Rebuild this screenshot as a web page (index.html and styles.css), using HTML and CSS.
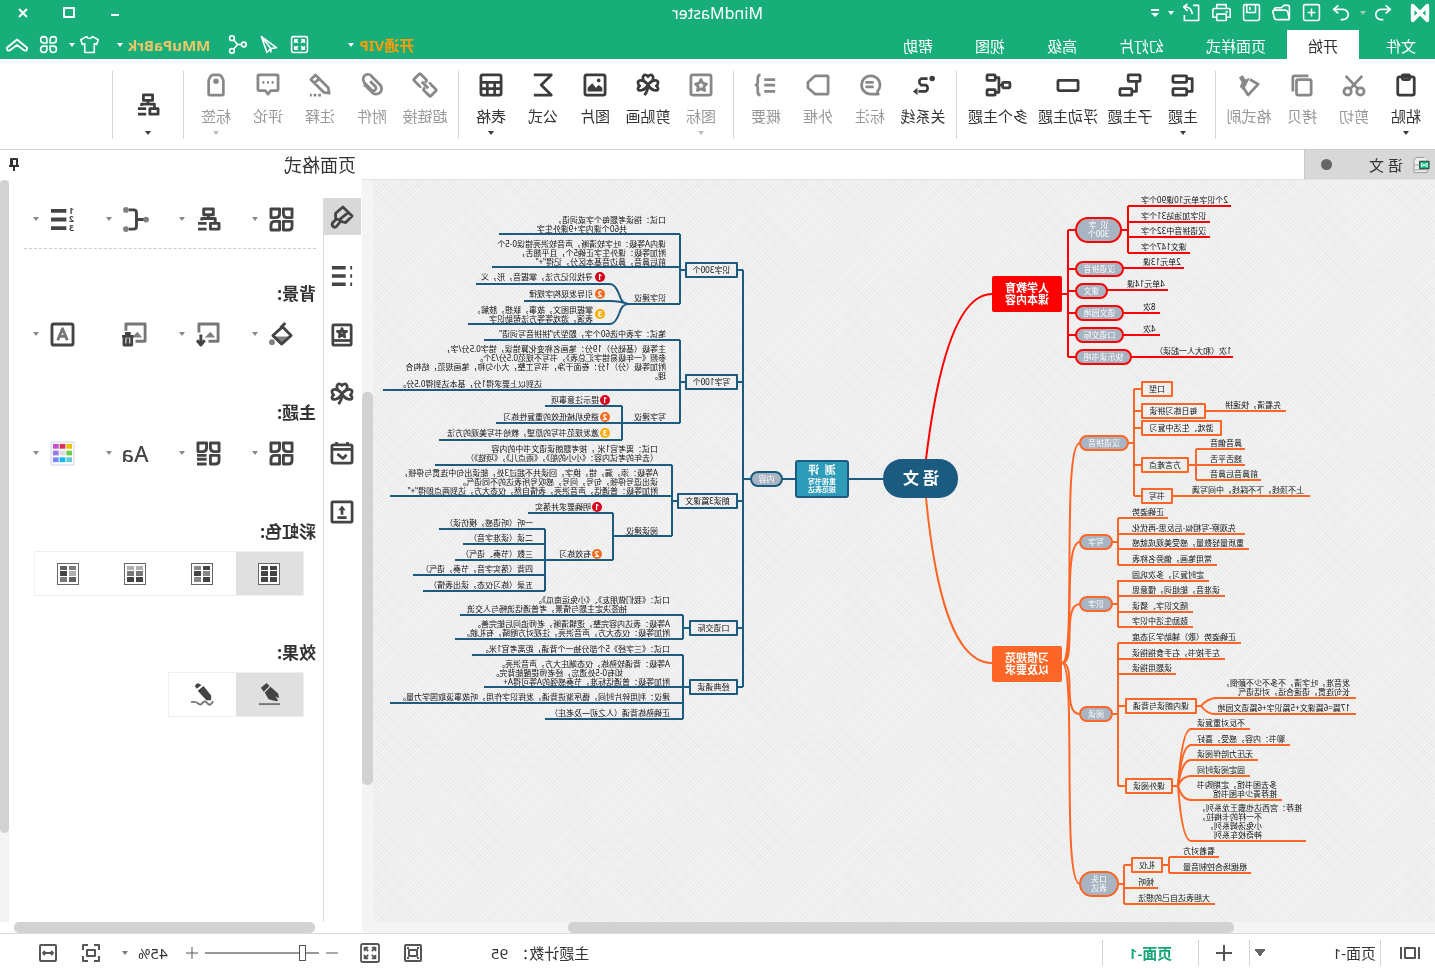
FILE: index.html
```html
<!DOCTYPE html>
<html lang="zh-CN">
<head>
<meta charset="utf-8">
<title>MindMaster</title>
<link rel="stylesheet" href="styles.css">
</head>
<body>
<svg class="sprite" aria-hidden="true">
  <symbol id="caret" viewBox="0 0 8 8"><path class="solid" d="M1 2h6L4 6z"/></symbol>
  <symbol id="logo" viewBox="0 0 24 24"><path class="ribbon-mark" d="M4 4v16L20 4v16z"/></symbol>
  <symbol id="undo" viewBox="0 0 24 24"><path d="M8 3L2 8l6 5M2 8h12a6 6 0 0 1 0 13h-3"/></symbol>
  <symbol id="redo" viewBox="0 0 24 24"><path d="M16 3l6 5-6 5M22 8H10a6 6 0 0 0 0 13h3"/></symbol>
  <symbol id="new" viewBox="0 0 24 24"><rect x="2" y="2" width="20" height="20" rx="2"/><path d="M12 7v10M7 12h10"/></symbol>
  <symbol id="open" viewBox="0 0 24 24"><path d="M2 19V5q0-2 2-2h5l3 3h7q2 0 2 3M2 21l2-9q1-3 3-3h14q2 0 2 2l-2 8q0 2-3 2H2"/></symbol>
  <symbol id="save" viewBox="0 0 24 24"><rect x="2" y="2" width="20" height="20" rx="2"/><path d="M7 2v10h11V2M14 5v4"/></symbol>
  <symbol id="print" viewBox="0 0 24 24"><path d="M6 7V2h12v5M6 18H1V9q0-2 2-2h18q2 0 2 2v9h-5M4 11h3"/><rect x="6" y="14" width="12" height="8"/></symbol>
  <symbol id="export" viewBox="0 0 24 24"><path d="M10 3H3v19h18v-7M22 5h-4q-6 1-7 9M17 1l5 4-5 5"/></symbol>
  <symbol id="full" viewBox="0 0 24 24"><rect x="2" y="2" width="20" height="20" rx="2"/><path d="M6 10V6h4M14 6h4v4M18 14v4h-4M10 18H6v-4M6 6l4 4M18 6l-4 4M18 18l-4-4M6 18l4-4"/></symbol>
  <symbol id="send" viewBox="0 0 24 24"><path d="M21 2L2 16l7 1 5 5zM21 2L9 17v5"/></symbol>
  <symbol id="share" viewBox="0 0 24 24"><circle cx="4" cy="12" r="3"/><circle cx="19" cy="4" r="3"/><circle cx="19" cy="20" r="3"/><path d="M7 12h5l5-6M12 12l5 6"/></symbol>
  <symbol id="shirt" viewBox="0 0 24 24"><path d="M8 2L1 6l2 6 3-1v11h12V11l3 1 2-6-7-4q-4 5-8 0z"/></symbol>
  <symbol id="cmd" viewBox="0 0 24 24"><path d="M10 10V6a4 4 0 1 0-4 4zM14 10h4a4 4 0 1 0-4-4zM10 14H6a4 4 0 1 0 4 4zM14 14v4a4 4 0 1 0 4-4z"/></symbol>
  <symbol id="up" viewBox="0 0 24 24"><path d="M1 15l11-9 11 9q0 4-3 3l-8-6-8 6q-3 1-3-3z"/></symbol>
  <symbol id="paste" viewBox="0 0 24 24"><rect x="3" y="3" width="18" height="20" rx="2"/><rect x="8" y="1" width="8" height="5" rx="1"/></symbol>
  <symbol id="cut" viewBox="0 0 24 24"><circle cx="5" cy="19" r="4"/><circle cx="19" cy="19" r="4"/><path d="M8 16L21 2M16 16L3 2"/></symbol>
  <symbol id="copy" viewBox="0 0 24 24"><rect x="2" y="6" width="16" height="17" rx="2"/><path d="M5 2h15q2 0 2 2v15"/></symbol>
  <symbol id="brushfmt" viewBox="0 0 24 24"><path d="M11 6L2 11l11 12 5-8"/><path class="solid" d="M11 4l5 2 3-5 4 3-3 5 2 5-4 4z"/></symbol>
  <symbol id="topic" viewBox="0 0 24 24"><rect x="8" y="2" width="15" height="7" rx="1"/><rect x="8" y="16" width="15" height="7" rx="1"/><path d="M8 5H2v14h6"/></symbol>
  <symbol id="subtopic" viewBox="0 0 24 24"><rect x="1" y="1" width="13" height="7" rx="1"/><rect x="10" y="16" width="13" height="7" rx="1"/><path d="M5 8v11h5"/></symbol>
  <symbol id="floating" viewBox="0 0 24 24"><rect x="1" y="7" width="22" height="11" rx="1"/></symbol>
  <symbol id="multi" viewBox="0 0 24 24"><rect x="-1" y="9" width="8" height="6" rx="1"/><rect x="15" y="1" width="9" height="6" rx="1"/><rect x="15" y="17" width="9" height="6" rx="1"/><path d="M7 12h4M15 4h-4v16h4"/></symbol>
  <symbol id="relation" viewBox="0 0 24 24"><circle class="solid" cx="2" cy="5" r="3"/><path d="M7 5h7a4 4 0 0 1 0 7H9a4 4 0 0 0 0 7h8"/><path class="solid" d="M18 15l5 4-5 4z"/></symbol>
  <symbol id="callout" viewBox="0 0 24 24"><path d="M4 19a10 10 0 1 1 7 3H3zM8 9h9M8 14h9"/></symbol>
  <symbol id="frame" viewBox="0 0 24 24"><path d="M2 2h13l8 7v6l-8 7H2q-1 0-1-1V3q0-1 1-1z"/></symbol>
  <symbol id="summary" viewBox="0 0 24 24"><path d="M2 6h12M2 12h12M2 19h12M18 1q3 0 3 4v4q0 3 2 3-2 0-2 3v4q0 4-3 4"/></symbol>
  <symbol id="star" viewBox="0 0 24 24"><rect x="1" y="1" width="22" height="22" rx="2"/><path d="M12 6l2 4 4 1-3 3 1 4-4-2-4 2 1-4-3-3 4-1z"/></symbol>
  <symbol id="clover" viewBox="0 0 24 24"><path d="M12 11C4 7 6 1 9 1q2 0 3 2 1-2 3-2c3 0 5 6-3 10zM12 12C8 19 1 19 1 16q0-2 2-3-2-1-2-4c1-3 8-3 11 3zM12 12c4 7 11 7 11 4q0-2-2-3 2-1 2-4c-1-3-8-3-11 3zM12 12q0 7 4 11"/></symbol>
  <symbol id="picture" viewBox="0 0 24 24"><rect x="1" y="1" width="22" height="22" rx="2"/><circle class="solid" cx="8" cy="7" r="2"/><path class="solid" d="M4 19v-4l4-3 3 3 4-5 5 5v4z"/></symbol>
  <symbol id="sigma" viewBox="0 0 24 24"><path d="M22 1H3l11 11L3 23h19"/></symbol>
  <symbol id="table" viewBox="0 0 24 24"><rect x="1" y="1" width="22" height="22" rx="2"/><path d="M1 9h22M1 16h22M8 9v14M16 9v14"/></symbol>
  <symbol id="link" viewBox="0 0 24 24"><g transform="rotate(-45 12 12)"><path d="M10 14v2q0 1-1 1H0q-1 0-1-1V8q0-1 1-1h9q1 0 1 1M14 10V8q0-1 1-1h9q1 0 1 1v8q0 1-1 1h-9q-1 0-1-1M7 12h10"/></g></symbol>
  <symbol id="clip" viewBox="0 0 24 24"><path d="M21 11l-9 9a6 6 0 0 1-9-8l9-9a5 5 0 0 1 9 5q0 2-2 3l-7 7a3 3 0 0 1-4-4l6-6"/></symbol>
  <symbol id="note" viewBox="0 0 24 24"><path d="M17 1l5 5L8 20l-6 1 1-6zM13 5l5 5M11 23h3M16 23h3M21 23h2"/></symbol>
  <symbol id="comment" viewBox="0 0 24 24"><path d="M2 1h20q1 0 1 1v15q0 1-1 1h-7l-3 4-3-4H2q-1 0-1-1V2q0-1 1-1z"/><path d="M6 9h2M11 9h2M16 9h2"/></symbol>
  <symbol id="tag" viewBox="0 0 24 24"><path d="M4 7q2-6 5-6h6q3 0 5 6v15q0 1-1 1H5q-1 0-1-1z"/><circle class="solid" cx="12" cy="8" r="3"/></symbol>
  <symbol id="layout" viewBox="0 0 24 24"><rect x="7" y="1" width="10" height="6"/><path d="M12 7v4M5 15v-4h14v2M14 16h9M14 22h9"/><rect x="1" y="16" width="9" height="6"/></symbol>
  <symbol id="paint" viewBox="0 0 24 24"><path d="M1 11L11 1l8 7v6l-4 1q-3 3-7 3zM5 7l10 8M17 13l5 5q2 3-1 5-2 1-4-2l-4-5"/></symbol>
  <symbol id="list" viewBox="0 0 24 24"><path class="bold" d="M8 3h15M8 12h15M8 21h15M1 3h2M1 12h2M1 21h2"/></symbol>
  <symbol id="book" viewBox="0 0 24 24"><rect x="2" y="1" width="20" height="22" rx="1"/><path d="M2 18h20"/><path d="M12 5l1 3h4l-3 2 1 4-3-2-3 2 1-4-3-2h4z"/></symbol>
  <symbol id="task" viewBox="0 0 24 24"><rect x="1" y="3" width="22" height="20" rx="2"/><path d="M1 8h22M6 0v4M18 0v4M7 14l4 4 6-5"/></symbol>
  <symbol id="upload" viewBox="0 0 24 24"><rect x="1" y="1" width="22" height="22" rx="1"/><path d="M12 15V7M7 18h10"/><path class="solid" d="M8 10l4-5 4 5z"/></symbol>
  <symbol id="grid" viewBox="0 0 24 24"><path d="M1 1h9v5q0 4-4 4H1zM14 1h9v9h-5q-4 0-4-4zM1 14h9v9H5q-4 0-4-4zM14 14h5q4 0 4 4v5h-9z"/></symbol>
  <symbol id="gridlist" viewBox="0 0 24 24"><path d="M1 1h9v5q0 4-4 4H1zM14 1h9v9h-5q-4 0-4-4zM1 14h9v9H5q-4 0-4-4zM14 14h10M14 18h10M14 23h10"/></symbol>
  <symbol id="tree" viewBox="0 0 24 24"><path d="M3 12h7M19 2h-5q-3 0-3 3v14q0 3 3 3h5"/><circle class="gray" cx="1" cy="12" r="3"/><circle class="gray" cx="22" cy="2" r="3"/><circle class="gray" cx="22" cy="22" r="3"/></symbol>
  <symbol id="bucket" viewBox="0 0 24 24"><path class="gray" d="M4 14h18l-9 8z"/><path d="M2 13l9-9 10 9-9 9zM8 0l5 5"/><circle class="gray" cx="22" cy="20" r="3"/></symbol>
  <symbol id="imgdown" viewBox="0 0 24 24"><path class="dim" d="M12 19H2V1h20v9"/><path class="gray" d="M5 15l5-6 6 6z"/><path d="M20 12v10M16 18l4 5 4-5"/></symbol>
  <symbol id="imgdel" viewBox="0 0 24 24"><path class="dim" d="M12 19H2V1h20v7"/><path class="gray" d="M5 15l5-6 6 6z"/><path d="M14 14h12M17 11h6M16 15v8h8v-8M20 16v6"/></symbol>
  <symbol id="boxa" viewBox="0 0 24 24"><rect x="1" y="1" width="22" height="22" rx="2"/><path class="dim" d="M7 18l5-12 5 12M8 14h8"/></symbol>
  <symbol id="colors" viewBox="0 0 24 24"><rect x="0" y="0" width="24" height="24" fill="#fff" stroke="#ccd0e6" stroke-width="1"/><g stroke="none"><path fill="#e8c100" d="M2 2h6v5H2z"/><path fill="#dc2f55" d="M9 2h6v5H9z"/><path fill="#c052d0" d="M16 2h6v5h-6z"/><path fill="#6fce45" d="M2 9h6v5H2z"/><path fill="#dcdcdc" d="M9 9h6v5H9z"/><path fill="#9a78ea" d="M16 9h6v5h-6z"/><path fill="#64c8dc" d="M2 16h6v5H2z"/><path fill="#10b8f4" d="M9 16h6v5H9z"/><path fill="#7a86ff" d="M16 16h6v5h-6z"/></g></symbol>
  <symbol id="pen" viewBox="0 0 24 24"><path class="solid" d="M15 0l6 5-3 4-6-6zM11 4l6 6-4 7-8 2-2-1 3-4-4 2 1-5z"/><path class="dim" d="M1 22h22"/></symbol>
  <symbol id="marker" viewBox="0 0 24 24"><path class="solid" d="M15 1q3-2 5 2l-2 3-5-4zM11 3l6 5-9 10H3v-5z"/><path class="dim" d="M1 19q3 6 6 2t6 1q2 1 4-1 2-2 7-1"/></symbol>
</svg>

<div class="app">
  <header class="topbar">
    <div class="titlebar">
      <div class="quick">
        <svg class="brand"><use href="#logo"/></svg>
        <button class="q q-undo" aria-label="撤销"><svg><use href="#undo"/></svg></button>
        <button class="q q-caret dimmed" aria-label="撤销列表"><svg><use href="#caret"/></svg></button>
        <button class="q" aria-label="恢复"><svg><use href="#redo"/></svg></button>
        <button class="q" aria-label="新建"><svg><use href="#new"/></svg></button>
        <button class="q" aria-label="打开"><svg><use href="#open"/></svg></button>
        <button class="q" aria-label="保存"><svg><use href="#save"/></svg></button>
        <button class="q" aria-label="打印"><svg><use href="#print"/></svg></button>
        <button class="q" aria-label="导出"><svg><use href="#export"/></svg></button>
        <button class="q q-caret" aria-label="导出选项"><svg><use href="#caret"/></svg></button>
        <button class="q q-more" aria-label="自定义"><svg viewBox="0 0 8 10"><path class="solid" d="M0 1h8v2H0zM0 5h8L4 9z"/></svg></button>
      </div>
      <h1 class="title">MindMaster</h1>
      <div class="window">
        <button aria-label="最小化"><svg viewBox="0 0 12 12"><path d="M2 8h8"/></svg></button>
        <button aria-label="最大化"><svg viewBox="0 0 12 12"><rect x="1" y="1" width="10" height="9"/></svg></button>
        <button aria-label="关闭"><svg viewBox="0 0 12 12"><path d="M2 2l8 8M10 2l-8 8"/></svg></button>
      </div>
    </div>
    <div class="menubar">
      <nav class="tabs">
        <button class="tab tab-file">文件</button><button class="tab active">开始</button><button class="tab">页面样式</button><button class="tab">幻灯片</button><button class="tab">高级</button><button class="tab">视图</button><button class="tab">帮助</button>
      </nav>
      <div class="account">
        <button class="vip">开通VIP<svg class="caret"><use href="#caret"/></svg></button>
        <button class="a" aria-label="全屏"><svg><use href="#full"/></svg></button>
        <button class="a" aria-label="发送"><svg><use href="#send"/></svg></button>
        <button class="a" aria-label="分享"><svg><use href="#share"/></svg></button>
        <button class="user">MMuPaBrk<svg class="caret"><use href="#caret"/></svg></button>
        <button class="skin" aria-label="皮肤"><svg><use href="#shirt"/></svg><svg class="caret"><use href="#caret"/></svg></button>
        <button class="a" aria-label="应用"><svg><use href="#cmd"/></svg></button>
        <button class="a" aria-label="收起"><svg class="wide"><use href="#up"/></svg></button>
      </div>
    </div>
  </header>

  <div class="ribbon">
    <div class="group first">
      <button class="tool"><svg><use href="#paste"/></svg>粘贴<svg class="caret"><use href="#caret"/></svg></button>
      <button class="tool off"><svg><use href="#cut"/></svg>剪切</button>
      <button class="tool off"><svg><use href="#copy"/></svg>拷贝</button>
      <button class="tool w3 off"><svg><use href="#brushfmt"/></svg>格式刷</button>
    </div>
    <div class="group">
      <button class="tool"><svg><use href="#topic"/></svg>主题<svg class="caret"><use href="#caret"/></svg></button>
      <button class="tool w3"><svg><use href="#subtopic"/></svg>子主题</button>
      <button class="tool w4"><svg><use href="#floating"/></svg>浮动主题</button>
      <button class="tool w4"><svg><use href="#multi"/></svg>多个主题</button>
    </div>
    <div class="group">
      <button class="tool w3"><svg><use href="#relation"/></svg>关系线</button>
      <button class="tool off"><svg><use href="#callout"/></svg>标注</button>
      <button class="tool off"><svg><use href="#frame"/></svg>外框</button>
      <button class="tool off"><svg><use href="#summary"/></svg>概要</button>
    </div>
    <div class="group">
      <button class="tool off"><svg><use href="#star"/></svg>图标<svg class="caret"><use href="#caret"/></svg></button>
      <button class="tool w3"><svg><use href="#clover"/></svg>剪贴画</button>
      <button class="tool"><svg><use href="#picture"/></svg>图片</button>
      <button class="tool"><svg><use href="#sigma"/></svg>公式</button>
      <button class="tool"><svg><use href="#table"/></svg>表格<svg class="caret"><use href="#caret"/></svg></button>
    </div>
    <div class="group">
      <button class="tool w3 off"><svg><use href="#link"/></svg>超链接</button>
      <button class="tool off"><svg><use href="#clip"/></svg>附件</button>
      <button class="tool off"><svg><use href="#note"/></svg>注释</button>
      <button class="tool off"><svg><use href="#comment"/></svg>评论</button>
      <button class="tool off"><svg><use href="#tag"/></svg>标签<svg class="caret"><use href="#caret"/></svg></button>
    </div>
    <div class="group last">
      <button class="tool lone" aria-label="布局"><svg><use href="#layout"/></svg><svg class="caret"><use href="#caret"/></svg></button>
    </div>
  </div>

  <main class="work">
    <section class="doc">
      <div class="doctabs">
        <div class="doctab">
          <svg viewBox="0 0 18 18"><path d="M6 1h9l2 3v13H3V6" fill="#eee" stroke="#999"/><path d="M12 9h4M5 14h11" stroke="#999"/><path d="M1 5h10v8H1z" fill="#10b980"/><path d="M3 11V7l6 4V7z" fill="none" stroke="#fff"/></svg>
          <span>语 文</span><i class="dirty"></i>
        </div>
      </div>
      <div class="stage">
        <div class="canvas"><svg id="map" class="map" viewBox="0 180 1062 742" width="1062" height="742" role="img" aria-label="语文 思维导图"></svg></div>
        <div class="vbar"><i class="thumb-doc"></i></div>
      </div>
      <div class="hbar"><i class="thumb-wide"></i></div>
    </section>

    <aside class="panel">
      <div class="panel-head"><h2>页面格式</h2><button aria-label="固定"><svg viewBox="0 0 12 16"><path d="M3 2h6v7H3zM1 9h10M6 9v5M8 2v7"/></svg></button></div>
      <div class="panel-body">
        <nav class="rail">
          <button class="on" aria-label="页面格式"><svg><use href="#paint"/></svg></button>
          <button aria-label="大纲"><svg><use href="#list"/></svg></button>
          <button aria-label="图标"><svg><use href="#book"/></svg></button>
          <button aria-label="剪贴画"><svg><use href="#clover"/></svg></button>
          <button aria-label="任务"><svg><use href="#task"/></svg></button>
          <button aria-label="导出"><svg><use href="#upload"/></svg></button>
        </nav>
        <div class="options">
          <div class="row row-top">
            <button aria-label="布局"><svg><use href="#grid"/></svg><svg class="caret"><use href="#caret"/></svg></button>
            <button aria-label="结构"><svg><use href="#layout"/></svg><svg class="caret"><use href="#caret"/></svg></button>
            <button aria-label="连线"><svg><use href="#tree"/></svg><svg class="caret"><use href="#caret"/></svg></button>
            <button aria-label="编号"><svg class="numbers" viewBox="0 0 24 24"><path class="bold" d="M8 3h16M8 12h16M8 21h16"/><text x="0" y="6">1</text><text x="0" y="15">2</text><text x="0" y="24">3</text></svg><svg class="caret"><use href="#caret"/></svg></button>
          </div>
          <h3>背景:</h3>
          <div class="row">
            <button aria-label="背景颜色"><svg><use href="#bucket"/></svg><svg class="caret"><use href="#caret"/></svg></button>
            <button aria-label="背景图片"><svg><use href="#imgdown"/></svg><svg class="caret"><use href="#caret"/></svg></button>
            <button aria-label="删除图片"><svg><use href="#imgdel"/></svg></button>
            <button aria-label="水印"><svg><use href="#boxa"/></svg><svg class="caret"><use href="#caret"/></svg></button>
          </div>
          <h3>主题:</h3>
          <div class="row">
            <button aria-label="主题"><svg><use href="#grid"/></svg><svg class="caret"><use href="#caret"/></svg></button>
            <button aria-label="主题样式"><svg><use href="#gridlist"/></svg><svg class="caret"><use href="#caret"/></svg></button>
            <button class="font" aria-label="主题字体"><span class="aa">Aa</span><svg class="caret"><use href="#caret"/></svg></button>
            <button aria-label="主题颜色"><svg><use href="#colors"/></svg><svg class="caret"><use href="#caret"/></svg></button>
          </div>
          <h3>彩虹色:</h3>
          <div class="seg">
            <button class="on" aria-label="单色"><i class="cells c1"><b></b><b></b><b></b><b></b><b></b><b></b></i></button>
            <button aria-label="交错"><i class="cells c2"><b></b><b></b><b></b><b></b><b></b><b></b></i></button>
            <button aria-label="渐变"><i class="cells c3"><b></b><b></b><b></b><b></b><b></b><b></b></i></button>
            <button aria-label="多彩"><i class="cells c4"><b></b><b></b><b></b><b></b><b></b><b></b></i></button>
          </div>
          <h3>效果:</h3>
          <div class="seg">
            <button class="on" aria-label="普通"><svg><use href="#pen"/></svg></button>
            <button aria-label="手绘"><svg><use href="#marker"/></svg></button>
          </div>
        </div>
        <div class="vbar slim"><i class="thumb-panel"></i></div>
      </div>
      <div class="panel-foot"><i class="thumb-foot"></i></div>
    </aside>
  </main>

  <footer class="status">
    <button class="pages" aria-label="页面列表"><svg viewBox="0 0 20 14"><path d="M1 1v12M19 1v12"/><rect x="5" y="2" width="10" height="10"/></svg></button>
    <select class="page-select" aria-label="页面"><option>页面-1</option></select>
    <button class="add" aria-label="新建页面"><svg viewBox="0 0 16 16"><path d="M8 0v16M0 8h16"/></svg></button>
    <button class="page-tab">页面-1</button>
    <p class="count">主题计数：<span>95</span></p>
    <div class="zoom">
      <button class="z" aria-label="演示"><svg viewBox="0 0 18 18"><rect x="1" y="1" width="16" height="16" rx="1"/><rect x="5" y="6" width="8" height="6"/><path d="M3 4h2M13 4h2M3 14h2M13 14h2"/></svg></button>
      <button class="z z-full" aria-label="全屏"><svg viewBox="2 2 20 20"><use href="#full" width="24" height="24"/></svg></button>
      <button class="s" aria-label="缩小"><svg viewBox="0 0 12 12"><path d="M0 6h12"/></svg></button>
      <input type="range" min="0" max="100" value="12" aria-label="缩放">
      <button class="s" aria-label="放大"><svg viewBox="0 0 12 12"><path d="M0 6h12M6 0v12"/></svg></button>
      <button class="pct">45%<svg class="caret"><use href="#caret"/></svg></button>
      <button class="z" aria-label="适合页面"><svg viewBox="0 0 18 18"><path d="M1 6V1h5M12 1h5v5M17 12v5h-5M6 17H1v-5"/><rect x="5" y="6" width="8" height="6"/></svg></button>
      <button class="z" aria-label="适合宽度"><svg viewBox="0 0 18 18"><rect x="1" y="1" width="16" height="16" rx="1"/><path d="M4 9h10M6 7L4 9l2 2M12 7l2 2-2 2"/></svg></button>
    </div>
  </footer>
</div>
<script src="map.js"></script>
</body>
</html>
```
FILE: styles.css
```css
* { box-sizing: border-box; }
html, body { height: 100%; margin: 0; overflow: hidden; }
body { font-family: "Noto Sans", "Noto Sans CJK SC", sans-serif; font-size: 15px; line-height: 20px; color: #333; background: #fff; }
h1, h2, h3, p { margin: 0; font-weight: 400; }
button { border: 0; padding: 0; margin: 0; background: none; color: inherit; font: inherit; display: flex; align-items: center; justify-content: center; white-space: nowrap; }
svg { fill: none; stroke: currentColor; stroke-width: 2; stroke-linejoin: round; overflow: visible; flex: none; }
symbol { overflow: visible; }
.sprite { position: absolute; width: 0; height: 0; }
.solid { fill: currentColor; stroke: none; }
.gray { fill: #808080; stroke: none; }
.dim { stroke: #777; }
.bold { stroke-width: 4; }
.ribbon-mark { stroke-width: 4; }
.numbers text { font: 700 9px "Noto Sans", sans-serif; fill: currentColor; stroke: none; }
.caret { width: 8px; height: 8px; }

/* right-to-left mirrored interface */
.app { height: 100%; display: flex; flex-direction: column; transform: scaleX(-1); }

.topbar { background: #17ae7a; color: #fff; }
.titlebar { height: 30px; display: grid; grid-template-columns: 1fr auto 1fr; align-items: center; padding-bottom: 5px; }
.title { font-size: 16px; }
.quick { display: flex; align-items: center; padding-left: 4px; }
.brand { width: 22px; height: 22px; margin-right: 12px; }
.q { width: 30px; height: 24px; }
.q svg { width: 19px; height: 19px; }
.q-undo { width: 28px; }
.q-caret { width: 12px; }
.q-caret svg { width: 8px; height: 8px; }
.q-more { width: 20px; }
.q-more svg { width: 8px; height: 10px; }
.dimmed { color: #9fc9b8; }
.window { display: flex; justify-content: flex-end; }
.window button { width: 46px; height: 24px; }
.window svg { width: 12px; height: 12px; }
.menubar { height: 29px; display: flex; justify-content: space-between; }
.tabs { display: flex; }
.tab { padding: 2px 21px 0; }
.tab-file { padding: 2px 27px 0 19px; }
.tab.active { background: #fff; color: #333; }
.account { display: flex; align-items: center; padding-right: 2px; }
.a { width: 31px; height: 28px; }
.account svg { width: 19px; height: 19px; }
.account svg.wide { width: 22px; height: 22px; }
.account svg.caret { width: 8px; height: 8px; margin-left: 4px; }
.vip { color: #ff9c00; font-weight: 700; margin-right: 32px; }
.user { color: #f1c668; font-weight: 700; margin: 0 17px 0 12px; }
.vip .caret, .user .caret { color: #fff; }
.skin { margin-right: 4px; }

.ribbon { height: 91px; display: flex; align-items: flex-start; padding-top: 12px; border-bottom: 1px solid #d0d0d0; }
.group { height: 68px; display: flex; padding: 0 6px; border-right: 1px solid #d4d4d4; }
.group.first { padding-left: 3px; }
.tool { width: 52px; height: 68px; flex-direction: column; justify-content: flex-start; color: #333; }
.tool svg { width: 22px; height: 22px; margin: 3px 0 10px; stroke-width: 3; color: #3c3c3c; }
.tool svg.caret { width: 8px; height: 8px; margin: 3px 0 0; }
.w3 { width: 54px; }
.w4 { width: 70px; }
.off { color: #999; }
.off svg { color: #888; }
.off svg.caret { color: #bbb; }
.lone { width: 58px; padding-top: 20px; }
.tool.off svg { color: #888; }
.tool.off svg.caret { color: #bbb; }

.work { flex: 1; min-height: 0; display: flex; }
.doc { flex: 1; min-width: 0; display: flex; flex-direction: column; }
.doctabs { height: 30px; border-bottom: 1px solid #e2e2e2; display: flex; }
.doctab { width: 131px; background: #d8d8d8; border-right: 1px solid #c8c8c8; display: flex; align-items: center; padding: 0 16px 0 5px; }
.doctab svg { width: 17px; height: 18px; margin-right: 10px; stroke-width: 1; }
.dirty { width: 11px; height: 11px; border-radius: 50%; background: #666; margin-left: auto; }
.stage { flex: 1; min-height: 0; display: flex; }
.canvas { flex: 1; min-width: 0; overflow: hidden; background-color: #efefef; background-image: repeating-linear-gradient(45deg, rgba(255,255,255,.3) 0 1px, transparent 1px 3px), repeating-linear-gradient(-45deg, rgba(0,0,0,.02) 0 1px, transparent 1px 3px); }
.map { display: block; }
.vbar { width: 11px; background: #f4f4f4; }
.vbar i, .hbar i, .panel-foot i { display: block; background: #d2d2d2; border-radius: 5px; }
.thumb-doc { height: 53%; margin-top: 212px; }
.thumb-panel { height: 88%; }
.slim { width: 10px; }
.hbar { height: 11px; background: #f4f4f4; padding-left: 201px; }
.hbar i { width: 666px; height: 11px; }

.panel { width: 362px; display: flex; flex-direction: column; }
.panel-head { height: 30px; display: flex; align-items: center; justify-content: space-between; padding: 0 8px 0 6px; }
.panel-head h2 { font-size: 18px; }
.panel-head svg { width: 12px; height: 16px; }
.panel-body { flex: 1; min-height: 0; display: flex; }
.rail { width: 40px; margin-top: 18px; padding-left: 1px; border-right: 1px solid #dcdcdc; display: flex; flex-direction: column; gap: 22px; }
.rail button { width: 37px; height: 37px; }
.rail svg { width: 22px; height: 22px; color: #444; stroke-width: 3; }
.on { background: #d8d8d8; }
.options { flex: 1; padding: 20px 15px 0 7px; }
.row { display: grid; grid-template-columns: repeat(4, 73px); height: 38px; margin: 9px 0 0; color: #444; }
.row button { justify-content: flex-start; padding-left: 23px; }
.row svg { width: 23px; height: 23px; stroke-width: 3; }
.row svg.caret { color: #888; width: 8px; height: 8px; margin-left: 11px; }
.row-top { margin: 0; height: 49px; padding-bottom: 10px; border-bottom: 1px dashed #ccc; }
.row .font { padding-left: 20px; }
.aa { width: 30px; margin-right: -4px; font-size: 22px; font-weight: 500; }
h3 { font-size: 17px; line-height: 24px; font-weight: 700; margin-top: 48px; }
.row-top + h3 { margin-top: 33px; }
.seg { display: inline-flex; margin: 7px 0 0 12px; border: 1px solid #efefef; }
.seg + h3 { margin-top: 45px; }
.seg button { width: 67px; height: 43px; color: #444; }
.seg .on { background: #e0e0e0; }
.seg svg { width: 23px; height: 23px; }
.cells { width: 22px; height: 22px; border: 1px solid #666; padding: 2px; display: grid; grid-template-columns: 1fr 1fr; gap: 1px 2px; background: #fff; }
.cells b { background: #444; }
.c2 b:nth-child(2), .c2 b:nth-child(3), .c2 b:nth-child(6) { background: #888; }
.c3 b:nth-child(-n+2) { background: #b0b0b0; }
.c3 b:nth-child(3), .c3 b:nth-child(4) { background: #777; }
.c4 b:nth-child(1), .c4 b:nth-child(6) { background: #7a7a7a; }
.c4 b:nth-child(3) { background: #b0b0b0; }
.c4 b:nth-child(2), .c4 b:nth-child(5) { background: #606060; }
.panel-foot { height: 11px; padding: 0 14px 0 47px; }
.panel-foot i { height: 11px; }

.status { height: 36px; border-top: 1px solid #dcdcdc; display: flex; align-items: center; background: #fff; padding-top: 2px; }
.status svg { stroke-width: 2; color: #555; }
.pages { width: 55px; height: 26px; border-right: 1px solid #d4d4d4; padding-right: 5px; }
.pages svg { width: 20px; height: 14px; }
.page-select { width: 131px; height: 26px; border: 0; border-right: 1px solid #d4d4d4; appearance: none; font: inherit; color: #333; padding: 0 0 0 4px; background: conic-gradient(from -35deg at 50% 100%, #666 70deg, transparent 0) no-repeat 114px 9px / 12px 8px; }
.add { width: 51px; height: 26px; border-right: 1px solid #d4d4d4; }
.add svg { width: 16px; height: 16px; }
.page-tab { width: 96px; height: 26px; border-right: 1px solid #d4d4d4; color: #14a673; font-weight: 600; }
.count { margin-left: auto; margin-right: 56px; }
.count span { margin-left: 6px; }
.zoom { display: flex; align-items: center; padding-right: 27px; }
.z { width: 43px; height: 26px; }
.z svg { width: 18px; height: 18px; }
.z-full { margin-right: 4px; }
.s { width: 26px; height: 26px; }
.s svg { width: 12px; height: 12px; }
.status .s svg { stroke-width: 1; }
.zoom input { width: 114px; height: 20px; margin: 0; appearance: none; background: linear-gradient(#999, #999) no-repeat center / 100% 2px; }
.zoom input::-webkit-slider-thumb { appearance: none; width: 7px; height: 16px; background: #fff; border: 1px solid #555; }
.pct { width: 66px; justify-content: flex-end; padding-right: 8px; }
.pct .caret { margin-left: 9px; color: #777; }

.map text { font: 8px "Noto Sans", "Noto Sans CJK SC", sans-serif; fill: #111; stroke: none; white-space: pre; }
.map .end { text-anchor: end; }
.map .mid { text-anchor: middle; }
.map .pilltext { fill: #fff; }
.map .head { font-size: 11px; font-weight: 700; fill: #fff; }
.map .root { font-size: 16px; font-weight: 700; fill: #fff; }
.map .tiny { font-size: 7px; font-weight: 700; fill: #fff; }
.map .mark { font-weight: 700; fill: #fff; }
```
FILE: map.js
```js
const RED = '#fd0000', ORANGE = '#fd6626', BLUE = '#1b5b80', STEEL = '#a8b4c1';
const map = document.getElementById('map');

function add(name, attrs, text) {
  const node = document.createElementNS('http://www.w3.org/2000/svg', name);
  for (const key in attrs) node.setAttribute(key, attrs[key]);
  if (text) node.textContent = text;
  map.appendChild(node);
}
const line = (color, d) => add('path', { d, stroke: color });
const label = (x, y, text, cls) => { if (text) add('text', { x, y: y + 3, class: cls || '' }, text); };

// topic drawn as a box or a pill, centred on y
function box(color, x1, x2, y, text) {
  add('rect', { x: x1, y: y - 7, width: x2 - x1, height: 14, stroke: color });
  label((x1 + x2) / 2, y, text, 'mid');
}
function pill(color, x1, x2, y, ...rows) {
  const h = rows.length > 1 ? 24 : 14;
  add('rect', { x: x1, y: y - h / 2, width: x2 - x1, height: h, rx: h / 2, stroke: color, fill: STEEL });
  rows.forEach((t, i) => label((x1 + x2) / 2, y + (rows.length > 1 ? i * 9 - 5 : 0), t, 'mid pilltext'));
}
function solid(color, x, y, rows) {
  add('rect', { x, y, width: 70, height: 36, rx: 2, fill: color, stroke: 'none' });
  rows.forEach((t, i) => label(x + 35, y + 13 + i * 12, t, 'mid head'));
}
// underlined topics: [far x, line y, text]; the text ends at textX
function leavesLeft(color, near, textX, list) {
  list.forEach(([far, y, t]) => { line(color, `M${near} ${y}H${far}`); label(textX, y - 6, t, 'end'); });
}
// underlined topics: [far x, line y, [text y, text, indent] ...]
function leavesRight(near, textX, list) {
  list.forEach(([far, y, ...rows]) => {
    line(BLUE, `M${near} ${y}H${far}`);
    rows.forEach(([ty, t, dx]) => label(textX + (dx || 0), ty, t));
  });
}
function badge(x, y, n) {
  add('circle', { cx: x, cy: y, r: 5, fill: ['#d9001b', '#f76b1c', '#fbab00'][n - 1], stroke: 'none' });
  label(x, y, String(n), 'mid mark');
}

// trunk
line(RED, 'M443 294C482 294 500 385 509 459');
line(ORANGE, 'M443 663C482 663 500 590 509 498');
line(BLUE, 'M552 479H586M639 479H653M684 479H692M692 270V687');
add('rect', { x: 477, y: 459, width: 75, height: 39, rx: 19, fill: BLUE, stroke: 'none' });
label(514, 481, '语 文', 'mid root');
add('rect', { x: 587, y: 461, width: 52, height: 36, rx: 2, fill: '#2f9cba', stroke: BLUE });
label(613, 471, '测  评', 'mid head');
label(613, 481, '重视书写', 'mid tiny');
label(613, 489, '规范表达', 'mid tiny');
pill(BLUE, 653, 684, 479, '内容');

// 人学教育课本内容
line(RED, 'M373 294H367M367 230V357M367 230H359M367 269H359M367 291H359M367 313H359M367 335H359M367 357H359M307 206V253M307 230H314');
solid(RED, 373, 276, ['人学教育', '课本内容']);
pill(RED, 314, 359, 230, '识  字', '300个');
pill(RED, 312, 359, 269, '汉语拼音');
pill(RED, 328, 359, 291, '课文');
pill(RED, 312, 359, 313, '语文园地');
pill(RED, 312, 359, 335, '口语交际');
pill(RED, 304, 359, 357, '快乐读书吧');
leavesLeft(RED, 307, 294, [[204, 206, '2个识字单元10课90个字'], [225, 222, '识字加油站31个字'], [225, 237, '汉语拼音中32个字'], [245, 253, '课文147个字']]);
leavesLeft(RED, 312, 292, [[251, 268, '2单元13课'], [275, 313, '8次'], [275, 335, '4次']]);
leavesLeft(RED, 328, 308, [[267, 290, '4单元14课']]);
leavesLeft(RED, 304, 280, [[202, 357, '1次（和大人一起读）']]);

// 习惯规范以及要求
[443, 542, 604, 714, 884].forEach(y => line(ORANGE, `M373 663C358 663 374 ${y} 355 ${y}`));
solid(ORANGE, 373, 646, ['习惯规范', '以及要求']);
pill(ORANGE, 307, 355, 443, '汉语拼音');
pill(ORANGE, 323, 355, 542, '写字');
pill(ORANGE, 323, 355, 604, '识字');
pill(ORANGE, 323, 355, 714, '阅读');
pill(ORANGE, 317, 355, 884, '口头', '表达');
line(ORANGE, 'M307 443H301M301 389V496M301 389H293M301 411H293M301 428H293M301 465H293M301 496H293');
box(ORANGE, 263, 293, 389, '口型');
box(ORANGE, 230, 293, 411, '每日练习拼读');
box(ORANGE, 214, 293, 428, '游戏、生活中复习');
box(ORANGE, 247, 293, 465, '方言难点');
box(ORANGE, 263, 293, 496, '书写');
leavesLeft(ORANGE, 230, 210, [[149, 411, '先看清，快速拼']]);
line(ORANGE, 'M247 465H239M239 449V480');
leavesLeft(ORANGE, 239, 225, [[190, 449, '鼻音偏音'], [190, 465, '翘舌平舌'], [174, 480, '前鼻音后鼻音']]);
leavesLeft(ORANGE, 263, 243, [[125, 496, '上不顶线，下不踩线，中间写满']]);
line(ORANGE, 'M323 542H317M317 518V565M323 604H317M317 580V627M323 714H317M317 643V786M317 706H309M317 786H309');
leavesLeft(ORANGE, 317, 303, [
  [267, 518, '正确姿势'], [190, 534, '先观察-写相似-后反思-再优化'], [186, 549, '重质量轻数量，感受美观成就感'], [218, 565, '常用笔画，偏旁名称表'],
  [226, 581, '定时复习，多次巩固'], [210, 596, '读准音，能组词，懂意思'], [242, 612, '随文识字、猜读'], [242, 627, '鼓励生活中识字'],
  [194, 643, '正确姿势（歌）辅助学习态度'], [210, 659, '左手按书，右手食指指读'], [259, 674, '读题用指读']]);
box(ORANGE, 239, 309, 706, '课内朗读与背诵');
line(ORANGE, 'M239 706H234Q228 699 220 698H79M234 706Q228 714 220 714H79');
label(85, 683, '发音准，吐字清，不多不少不颠倒，');
label(85, 692, '长句连贯，语速合适，对话语气');
label(85, 708, '17篇=6篇课文+5篇识字+6篇语文园地');
box(ORANGE, 263, 309, 786, '课外阅读');
line(ORANGE, 'M263 786H257');
[729, 745, 760, 776, 800, 841].forEach(y => line(ORANGE, `M257 786Q253 ${y} 244 ${y}`));
leavesLeft(ORANGE, 244, 238, [[185, 729, '不反对重复读'], [145, 745, '聊书：内容，感受，喜好'], [177, 760, '无压力陪伴阅读'], [185, 776, '固定阅读时间'], [153, 800, ''], [129, 841, '']]);
label(158, 785, '多去图书馆，定期购书');
label(158, 794, '推荐青少年图书馆');
label(133, 808, '推荐：宫西达也霸王龙系列，');
label(173, 817, '不一样的卡梅拉，');
label(173, 826, '小兔汤姆系列，');
label(173, 835, '神奇校车系列');
line(ORANGE, 'M317 884H311M311 865V904M311 865H303M273 865H266M266 857V873');
box(ORANGE, 273, 303, 865, '礼仪');
leavesLeft(ORANGE, 266, 252, [[216, 857, '看着对方'], [184, 873, '根据场合控制音量']]);
leavesLeft(ORANGE, 311, 297, [[277, 888, '倾听'], [220, 904, '大胆表达自己的想法']]);

// 测评 / 内容
[270, 382, 501, 628, 687].forEach(y => line(BLUE, `M692 ${y}H698`));
box(BLUE, 698, 749, 270, '识字300个');
box(BLUE, 698, 749, 382, '写字100个');
box(BLUE, 698, 757, 501, '朗读3篇课文');
box(BLUE, 698, 745, 628, '口语交际');
box(BLUE, 698, 745, 687, '经典诵读');

line(BLUE, 'M749 270H755M755 234V304M749 382H755M755 340V423');
leavesRight(755, 769, [
  [936, 234, [220, '口试：指读考题每个字或词语，'], [229, '共60个课内字+9课外生字', 39]],
  [943, 267, [244, '课内A等级：吐字较清晰，声音较洪亮错误0-5个'], [253, '附加等级：课外生字正确5个，且平翘舌，'], [262, '前后鼻音，鼻边音基本区分，记得“+”']],
  [807, 304, [298, '识字建议']],
  [951, 340, [334, '笔试：字表中选60个字，题型为“拼拼音写词语”']],
  [1052, 390, [349, '主等级（基础分）19分：笔画名称变化算错误，错字0.5分/字，'], [358, '参照《一年级易错字汇总表》，书写不规范0.5分/3个。'], [367, '附加等级（分）1分：卷面干净，书写工整，大小匀称，笔画规范，结构合'], [376, '理。'], [384, '达到以上要求得1分，基本达到得0.5分。', 124]],
  [813, 423, [417, '写字建议']]]);
line(BLUE, 'M807 304Q813 304 816 294Q820 284 825 284H959M807 304Q815 301 825 301H911M807 304Q813 304 816 314Q820 324 825 324H967');
[[277, 1], [294, 2], [314, 3]].forEach(([y, n]) => badge(835, y, n));
label(842, 277, '寻找识记方法，掌握音，形，义');
label(842, 294, '引导发现构字规律');
label(842, 310, '掌握用图文，故事，联想，肢解，');
label(842, 319, '表演，游戏等等方法帮助识字');
line(BLUE, 'M813 406V440');
leavesRight(813, 836, [[890, 406, [400, '提示注意事项']], [939, 423, [417, '避免机械低效的重复性练习']], [996, 440, [433, '激发规范书写的愿望，教给书写美观的方法']]]);
[[400, 1], [417, 2], [433, 3]].forEach(([y, n]) => badge(830, y, n));

line(BLUE, 'M757 501H763M763 465V536M822 513V560M890 529V591');
leavesRight(763, 777, [
  [1000, 465, [449, '口试：离考官1米 ，按考题朗读语文书中的内容'], [458, '（去年的考试内容：《小小的船》，《雨点儿》，《项链》）']],
  [1045, 496, [473, 'A等级：添，漏，错，换字，回读共不超过3处，能读出句中连贯与停顿，'], [482, '读出逗号停顿，句号，问号，感叹号所表达的不同语气。'], [491, '附加等级：普通话，声音洪亮，表情自然，仪态大方，达到两点即得“+”']],
  [822, 536, [531, '阅读建议']]]);
leavesRight(822, 844, [[907, 513, [507, '明确要求并落实']], [890, 560, [554, '有效练习']]]);
badge(838, 507, 1);
badge(838, 554, 2);
leavesRight(890, 902, [[996, 529, [523, '一听（听语感，模仿读）']], [972, 544, [538, '二读（读准字音）']], [980, 560, [554, '三数（节奏、语气）']], [1022, 575, [569, '四背（落实字音，节奏，语气）']], [1012, 591, [585, '五录（练习仪态，读出表情）']]]);

line(BLUE, 'M745 628H752M752 615V639M745 687H752M752 655V719');
leavesRight(752, 765, [
  [975, 615, [600, '口试：《我们做朋友》、《小兔运南瓜》。'], [609, '抽签决定主题与情景，考普通话流畅与人交流', 43]],
  [980, 639, [624, 'A等级：表达内容完整，逻辑清晰，老师追问后能完善。'], [633, '附加等级：仪态大方，声音洪亮，注视对方眼睛，有礼貌。']],
  [963, 655, [649, '口试：《三字经》5个部分抽一个背诵，距离考官1米。']],
  [951, 687, [664, 'A等级：背诵较熟练，仪态端庄大方，声音洪亮。'], [673, '如有0-5处遗忘，经老师提醒能背完。', 47], [682, '附加等级：普通话标准，节奏感强的A等可得A+']],
  [1045, 703, [697, '建议：利用碎片时间，循序渐进背诵，发挥识字作用，听故事汲取国学力量。']],
  [890, 719, [713, '正确熟练背诵（人之初—及老庄）']]]);
```
